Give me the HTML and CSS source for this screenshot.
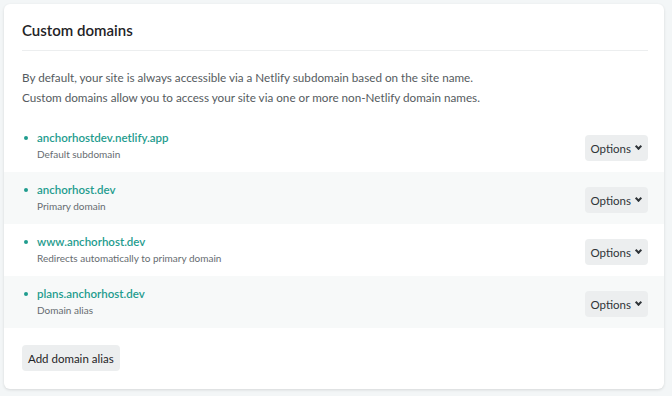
FILE: index.html
```html
<!DOCTYPE html>
<html lang="en">
<head>
  <meta charset="UTF-8" />
  <title>Custom domains</title>
  <link rel="stylesheet" href="styles.css">
</head>
<body>
  <section class="card">
    <header class="card-header">
      <h2>Custom domains</h2>
    </header>

    <p class="intro">
      By default, your site is always accessible via a Netlify subdomain based on the site name.<br>
      Custom domains allow you to access your site via one or more non-Netlify domain names.
    </p>

    <!-- Domain list -->
    <ul class="domains">
      <li class="domain">
        <div class="domain-info">
          <a href="#" class="domain-name">anchorhostdev.netlify.app</a>
          <span class="domain-note">Default subdomain</span>
        </div>
        <button class="btn-options">Options <span class="chevron"></span></button>
      </li>
      <li class="domain">
        <div class="domain-info">
          <a href="#" class="domain-name">anchorhost.dev</a>
          <span class="domain-note">Primary domain</span>
        </div>
        <button class="btn-options">Options <span class="chevron"></span></button>
      </li>
      <li class="domain">
        <div class="domain-info">
          <a href="#" class="domain-name">www.anchorhost.dev</a>
          <span class="domain-note">Redirects automatically to primary domain</span>
        </div>
        <button class="btn-options">Options <span class="chevron"></span></button>
      </li>
      <li class="domain">
        <div class="domain-info">
          <a href="#" class="domain-name">plans.anchorhost.dev</a>
          <span class="domain-note">Domain alias</span>
        </div>
        <button class="btn-options">Options <span class="chevron"></span></button>
      </li>
    </ul>

    <div class="card-footer">
      <button class="btn">Add domain alias</button>
    </div>
  </section>
</body>
</html>
```

FILE: styles.css
```css
body {
  margin: 0;
  padding: 4px 8px 7px 4px;
  background: #f3f6f7;
  font-family: Lato, "Open Sans", sans-serif;
  color: #1f2326;
}

.card {
  background: #ffffff;
  border-radius: 6px;
  box-shadow: 0 1px 3px rgba(0, 0, 0, 0.12);
  height: 385px;
  box-sizing: border-box;
}

.card-header {
  margin: 0 16px 0 18px;
  padding: 16px 0 10px;
  border-bottom: 1px solid #eceeef;
}

.card-header h2 {
  margin: 0;
  font-size: 15px;
  line-height: 20px;
  font-weight: 600;
  color: #1f2326;
}

.intro {
  margin: 16px 18px 13px;
  font-size: 11.7px;
  line-height: 20px;
  color: #555b60;
}

.domains {
  list-style: none;
  margin: 0;
  padding: 0;
}

.domain {
  display: flex;
  align-items: center;
  justify-content: space-between;
  height: 52px;
  box-sizing: border-box;
  padding: 0 16px 0 33px;
  position: relative;
}

.domain:nth-child(even) {
  background: #f7f9f9;
}

.domain::before {
  content: "";
  position: absolute;
  left: 20px;
  top: 16px;
  width: 4px;
  height: 4px;
  border-radius: 50%;
  background: #1f9c8e;
}

.domain-info {
  display: flex;
  flex-direction: column;
}

.domain-name {
  font-size: 11.5px;
  line-height: 17px;
  font-weight: 600;
  color: #1f9c8e;
  text-decoration: none;
}

.domain-note {
  font-size: 10px;
  line-height: 17px;
  color: #666c70;
}

.btn-options,
.btn {
  font-family: inherit;
  border: none;
  border-radius: 4px;
  background: #eceeef;
  color: #2f3438;
  cursor: pointer;
}

.btn-options {
  display: flex;
  align-items: center;
  gap: 5px;
  height: 26px;
  padding: 0 7px 0 6px;
  font-size: 11.5px;
  margin-top: 4px;
}

.chevron {
  width: 3px;
  height: 3px;
  border-right: 2px solid #2f3438;
  border-bottom: 2px solid #2f3438;
  transform: rotate(45deg);
  margin-top: -3px;
}

.card-footer {
  padding: 17px 18px;
}

.btn {
  height: 26px;
  padding: 0 6px;
  font-size: 11.5px;
  color: #1f2326;
}
```
